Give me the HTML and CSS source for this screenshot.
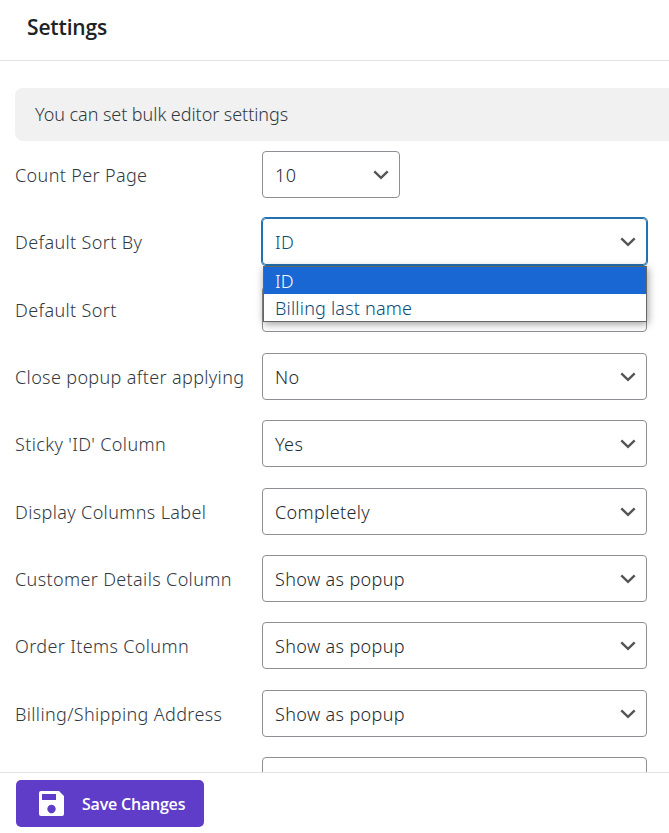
FILE: index.html
```html
<!DOCTYPE html>
<html lang="en"><head><meta charset="utf-8"><title>Settings</title><link rel="stylesheet" href="styles.css"></head>
<body>
<svg class="defs" width="0" height="0"><symbol id="chev" viewBox="0 0 16 10"><path d="M1.3 1.3 8 7.8l6.7-6.5" fill="none" stroke="#555" stroke-width="2.4"/></symbol></svg>
<header><h1>Settings</h1></header>
<main>
<div class="notice"><span>You can set bulk editor settings</span></div>
<div class="rows">
<div class="row"><label><span>Count Per Page</span></label><div class="select small"><span>10</span><svg><use href="#chev"/></svg></div></div>
<div class="row"><label><span>Default Sort By</span></label><div class="select active"><span>ID</span><svg><use href="#chev"/></svg><div class="menu"><div class="option chosen"><span>ID</span></div><div class="option"><span>Billing last name</span></div></div></div></div>
<div class="row"><label><span>Default Sort</span></label><div class="select covered"></div></div>
<div class="row"><label><span>Close popup after applying</span></label><div class="select"><span>No</span><svg><use href="#chev"/></svg></div></div>
<div class="row"><label><span>Sticky 'ID' Column</span></label><div class="select"><span>Yes</span><svg><use href="#chev"/></svg></div></div>
<div class="row"><label><span>Display Columns Label</span></label><div class="select"><span>Completely</span><svg><use href="#chev"/></svg></div></div>
<div class="row"><label><span>Customer Details Column</span></label><div class="select"><span>Show as popup</span><svg><use href="#chev"/></svg></div></div>
<div class="row"><label><span>Order Items Column</span></label><div class="select"><span>Show as popup</span><svg><use href="#chev"/></svg></div></div>
<div class="row"><label><span>Billing/Shipping Address</span></label><div class="select"><span>Show as popup</span><svg><use href="#chev"/></svg></div></div>
<div class="row"><label></label><div class="select"></div></div>
</div>
</main>
<footer><button><svg class="save" viewBox="0 0 25 25"><path fill="#fff" fill-rule="evenodd" d="M2 0H20l5 5v18a2 2 0 0 1-2 2H2a2 2 0 0 1-2-2V2a2 2 0 0 1 2-2ZM3 3v6h14V3ZM12.500 13.800a4.200 4.200 0 1 0 .01 0Z"/></svg><span>Save Changes</span></button></footer>
</body></html>
```
FILE: styles.css
```css
* { box-sizing: border-box; }
body { margin: 0; height: 833px; overflow: hidden; display: flex; flex-direction: column; background: #fff; color: #32393f; font: 350 18px/24px "Noto Sans", sans-serif; letter-spacing: 0.36px; }
.defs { position: absolute; }
span { white-space: nowrap; }
header { flex: none; height: 61px; padding: 14px 27px 0; border-bottom: 1px solid #e2e2e2; }
h1 { margin: 0; font: 600 21px/26px "Open Sans", sans-serif; letter-spacing: -0.15px; color: #1d2327; }
main { flex: 1; min-height: 0; overflow: hidden; padding: 27px 0 0 15px; }
.notice { height: 53px; padding: 14px 20px; background: #f1f1f1; border-radius: 8px 0 0 8px; letter-spacing: -0.06px; }
.rows { padding-top: 10px; }
.row { display: flex; height: 67.35px; }
label { width: 247px; padding-top: 12px; }
.select { position: relative; display: flex; align-items: center; justify-content: space-between; width: 385px; height: 47px; padding: 1px 10px 0 12px; border: 1px solid #8c8f94; border-radius: 4px; color: #23292e; }
.select svg { width: 16px; height: 10px; }
.small { width: 138px; }
.covered { height: 46px; }
.active { border-color: #2271b1; box-shadow: 0 0 0 1px #2271b1; color: #0a4b78; }
.menu { position: absolute; z-index: 2; top: 47px; left: 0; width: 384px; height: 56px; border: 1px solid #666; background: #fff; box-shadow: 1px 2px 8px #0006; letter-spacing: 0.2px; }
.option { height: 27px; padding: 2px 11px; }
.chosen { background: #1967d2; color: #fff; }
footer { flex: none; height: 61px; padding: 7px 16px; border-top: 1px solid #e2e2e2; background: #fff; }
button { display: flex; align-items: center; gap: 18px; width: 188px; height: 47px; padding: 0 23px; border: 0; border-radius: 5px; background: #5f3dc9; color: #fff; font: 600 16px/22px "Open Sans", sans-serif; letter-spacing: -0.2px; }
.save { flex: none; width: 25px; height: 25px; }
```
